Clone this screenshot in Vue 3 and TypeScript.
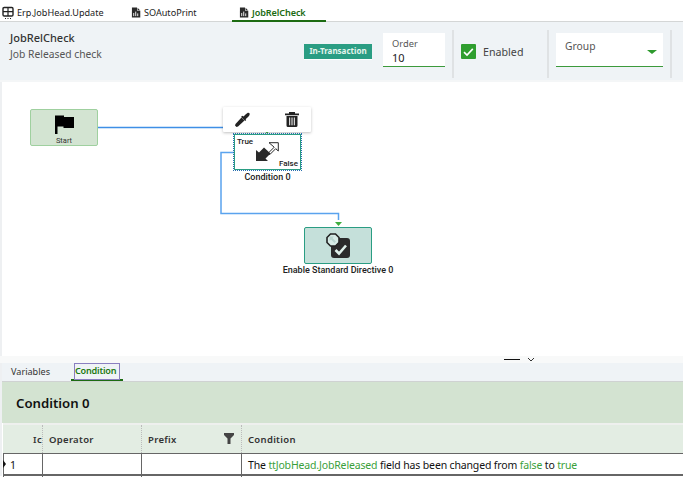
<script setup lang="ts">
interface Tab { label: string; icon: string; active?: boolean }
const tabs: Tab[] = [
  { label: 'Erp.JobHead.Update', icon: 'grid' },
  { label: 'SOAutoPrint', icon: 'doc' },
  { label: 'JobRelCheck', icon: 'doc', active: true },
]
</script>

<template>
  <div class="page">
    <nav class="tabs">
      <div v-for="t in tabs" :key="t.label" class="tab" :class="{ active: t.active, ['tab-' + t.icon]: true }">
        <svg v-if="t.icon === 'grid'" class="tab-icon" viewBox="0 0 12 14" width="12" height="14">
          <rect x="1" y="1.5" width="10" height="8.5" rx="1.2" fill="none" stroke="#222" stroke-width="1.400" />
          <path d="M1 5.700h10M6 1.500v8.500" stroke="#222" stroke-width="1.200" />
          <path d="M3 12.500h1M5.500 12.500h1M8 12.500h1" stroke="#222" stroke-width="1" />
        </svg>
        <svg v-else class="tab-icon" viewBox="0 0 11 12" width="10" height="11">
          <path d="M1 .5h6l3.200 3.200V11.500H1z" fill="#2a2a2a" />
          <path d="M6.600 0v4h4.400V0z" fill="#fff" />
          <path d="M7.200 .8v2.600h2.600z" fill="#2a2a2a" />
          <path d="M3 10V6.500M5.200 10V5M7.400 10V7" stroke="#fff" stroke-width="1" />
        </svg>
        <span>{{ t.label }}</span>
      </div>
    </nav>

    <header class="head">
      <div class="titles">
        <div class="title">JobRelCheck</div>
        <div class="subtitle">Job Released check</div>
      </div>
      <span class="badge">In-Transaction</span>
      <div class="field order">
        <label>Order</label>
        <span>10</span>
      </div>
      <div class="sep"></div>
      <div class="enabled">
        <span class="check">
          <svg viewBox="0 0 16 16" width="16" height="16"><path d="M3.200 8.200l3.200 3.100 6.200-6.600" fill="none" stroke="#fff" stroke-width="1.700" /></svg>
        </span>
        <span>Enabled</span>
      </div>
      <div class="sep"></div>
      <div class="field group">
        <label>Group</label>
        <i class="caret"></i>
      </div>
      <div class="sep last"></div>
    </header>

    <section class="canvas">
      <svg class="wires" width="683" height="274" viewBox="0 0 683 274">
        <path d="M98 45.500H225" fill="none" stroke="#3f8fe6" stroke-width="1.500" />
        <path d="M234 70.500H221V131.500H338.500V138" fill="none" stroke="#5aa3ee" stroke-width="1.500" />
        <path d="M335 140h7l-3.500 4z" fill="#3fae3f" />
        <path d="M265 49.500h4l-2 2z" fill="#3fae3f" />
      </svg>

      <div class="node start">
        <svg viewBox="0 0 19 19" width="19" height="19"><path d="M0 0.500h9v1.500h10v11H8.500v-1.500H2.500V19H0z" fill="#000" /></svg>
        <span>Start</span>
      </div>

      <div class="toolbar">
        <svg viewBox="0 0 15 15" width="15" height="15">
          <path d="M0 13.500l1.500 1.500 1.500-.5 6.500-6-3-3-6 6.500z" fill="#222" />
          <path d="M6 4.800l4.200 4.200 1-1-.6-.8 2.400-2.200c1.500-1.600 2-2.800 1.500-3.800-.8-1-2.200-.6-3.700 1L8.500 4.500l-.8-.8z" fill="#222" />
        </svg>
        <svg viewBox="0 0 14 15" width="14" height="15">
          <path d="M0 1.500h14v1.800H0zM4 0h6v1.500H4z" fill="#222" />
          <path d="M1.500 4h11v9.500a1.500 1.500 0 0 1-1.500 1.500H3a1.500 1.500 0 0 1-1.500-1.500z" fill="#222" />
          <path d="M4.700 5.500v7.800M7 5.500v7.800M9.300 5.500v7.800" stroke="#fff" stroke-width="1" />
        </svg>
      </div>

      <div class="node cond">
        <span class="lbl-true">True</span>
        <svg viewBox="0 0 23 19" width="23" height="19">
          <path d="M0 19V8l3 2.500L8 5.500l6.500 6-5 5 2.500 2.500z" fill="#2a2a2a" />
          <path d="M13 .7h9.300V9l-2.600-2.300-6 6-1.500-1.500 6-6z" fill="none" stroke="#2a2a2a" stroke-width="1" />
        </svg>
        <span class="lbl-false">False</span>
      </div>
      <div class="caption cond-cap">Condition 0</div>

      <div class="node directive">
        <svg viewBox="0 0 24 25" width="24" height="25">
          <rect x="5" y="5" width="19" height="20" rx="3" fill="#2b2b2b" />
          <path d="M9.500 17l3.500 3.500 7-8" fill="none" stroke="#dff0ea" stroke-width="2.600" />
          <path d="M4.500 1h5l3.500 3.500v5l-3.500 3.500h-5l-3.500-3.500v-5z" fill="#d7ebe6" stroke="#222" stroke-width="1.600" />
          <path d="M3.500 3.500h4.500l-1.500 1.500 3.500 3.500-1.500 1.500-3.500-3.500-1.500 1.500z" fill="#b8d4ce" />
        </svg>
      </div>
      <div class="caption dir-cap">Enable Standard Directive 0</div>
    </section>

    <div class="splitter">
      <i class="dash"></i>
      <svg viewBox="0 0 8 5" width="8" height="5"><path d="M1 1l3 3 3-3" fill="none" stroke="#333" stroke-width="1" /></svg>
    </div>

    <section class="lower">
      <div class="subtabs">
        <span class="subtab">Variables</span>
        <span class="subtab active"><b>Condition</b></span>
      </div>
      <div class="band">Condition 0</div>
      <div class="grid grid-head">
        <div class="th id">Ic</div>
        <div class="th">Operator</div>
        <div class="th prefix">
          Prefix
          <svg viewBox="0 0 10 11" width="10" height="11"><path d="M0 0h10v2L6.500 5.500V11h-3V5.500L0 2z" fill="#444" /></svg>
        </div>
        <div class="th">Condition</div>
      </div>
      <div class="grid grid-row">
        <div class="td id"><i class="marker"></i>1</div>
        <div class="td"></div>
        <div class="td"></div>
        <div class="td text">The <em>ttJobHead.JobReleased</em> field has been changed from <em>false</em> to <em>true</em></div>
      </div>
    </section>
  </div>
</template>

<style>
html, body { margin: 0; background: #fff; }
</style>

<style scoped>
.page {
  width: 683px;
  height: 500px;
  overflow: hidden;
  position: relative;
  background: #fff;
  font-family: "Noto Sans", "Liberation Sans", sans-serif;
  color: #222;
}
.tabs {
  height: 18px;
  margin-top: 4px;
  box-sizing: border-box;
  display: flex;
  border-bottom: 1px solid #d4d6d6;
  font-size: 9.100px;
  background: #fff;
}
.tab { display: flex; align-items: center; gap: 3px; height: 17px; box-sizing: border-box; }
.tab-grid { width: 128px; padding-left: 2px; }
.tab-doc { width: 104px; padding-left: 3px; }
.tab.active { width: 94px; padding-left: 7px; color: #1c6b12; font-weight: 600; border-bottom: 2px solid #1c6b12; height: 18px; letter-spacing: -.1px; }
.tab-icon { flex: none; }
.head {
  height: 60px;
  box-sizing: border-box;
  background: #eff3f6;
  display: flex;
  align-items: center;
  border-bottom: 2px solid #f4f6f7;
}
.titles { width: 304px; padding-left: 10px; box-sizing: border-box; margin-top: -10px; }
.title { font-size: 11px; font-weight: 500; line-height: 15px; color: #333; }
.subtitle { font-size: 10.300px; line-height: 18px; color: #555; }
.badge {
  width: 68px;
  height: 15px;
  margin-right: 11px;
  background: #2a9d83;
  color: #e6f5ee;
  border-bottom: 1px solid #fff;
  font-size: 8px;
  font-weight: 700;
  line-height: 14px;
  text-align: center;
  margin-top: 2px;
}
.field {
  background: #fff;
  border-bottom: 1px solid #3c9a3c;
  box-sizing: border-box;
  height: 34px;
  position: relative;
  margin-top: -2px;
}
.field label { display: block; font-size: 9.300px; color: #555; }
.order { width: 62px; padding: 4px 0 0 9px; font-size: 11px; color: #222; line-height: 14px; }
.sep { width: 2px; height: 48px; background: #dfe2e4; margin: 6px 0 0 7px; }
.enabled { width: 86px; display: flex; align-items: center; gap: 7px; padding-left: 7px; box-sizing: border-box; font-size: 10.700px; color: #444; margin-top: 1px; }
.check { width: 15px; height: 15px; background: #2f9e2f; display: flex; align-items: center; justify-content: center; border-radius: 1px; }
.group { width: 107px; margin-left: 7px; padding: 6px 0 0 9px; }
.group label { font-size: 10.300px; }
.caret { position: absolute; right: 6px; top: 17px; border: 5px solid transparent; border-top: 4px solid #2e9a2e; border-bottom: 0; }
.canvas {
  position: relative;
  height: 274px;
  border-left: 2px solid #eef0f2;
  box-sizing: border-box;
}
.wires { position: absolute; left: -2px; top: 0; }
.node { position: absolute; box-sizing: border-box; }
.start {
  left: 28px; top: 27px; width: 68px; height: 37px;
  background: #d3e4d2; border: 1px solid #9fd09f; border-radius: 2px;
  display: flex; flex-direction: column; align-items: center;
  font-family: Roboto, sans-serif; font-size: 7.500px; line-height: 9px; color: #333;
}
.start svg { margin: 5px 0 2px; flex: none; }
.toolbar {
  position: absolute; left: 221px; top: 25px; width: 88px; height: 25px;
  background: #fff; border-radius: 1px; box-shadow: 0 1px 3px rgba(0,0,0,.25);
  display: flex; justify-content: space-between; align-items: center;
  padding: 0 12px; box-sizing: border-box;
}
.cond {
  left: 232px; top: 52px; width: 67px; height: 36px;
  background: #fff; border: 1px solid #2a9d83; outline: 1px dotted #2a6fb0;
  display: flex; align-items: center; justify-content: center;
}
.cond svg { margin-bottom: 2px; }
.lbl-true { position: absolute; left: 2px; top: 1px; font-family: Roboto, sans-serif; font-size: 8px; font-weight: 500; line-height: 11px; }
.lbl-false { position: absolute; right: 2px; bottom: 0; font-family: Roboto, sans-serif; font-size: 8px; font-weight: 500; line-height: 11px; }
.caption { position: absolute; font-size: 9px; font-weight: 500; color: #222; text-align: center; font-family: Roboto, sans-serif; line-height: 12px; white-space: nowrap; }
.cond-cap { left: 225px; top: 89px; width: 81px; }
.directive {
  left: 302px; top: 145px; width: 68px; height: 37px;
  background: #c5e0da; border: 1px solid #2a9d83; border-radius: 2px;
  display: flex; align-items: center; justify-content: center;
}
.dir-cap { left: 256px; top: 182px; width: 160px; }
.splitter {
  height: 7px;
  background: #f8f9f9;
  display: flex; align-items: center; justify-content: flex-end; gap: 7px;
  padding-right: 148px;
  position: relative;
}
.dash { width: 16px; height: 1px; background: #111; display: block; }
.lower { border-left: 2px solid #eef0f2; box-sizing: border-box; }
.subtabs {
  height: 19px; background: #eff3f6; border-bottom: 1px solid #cfd2d2;
  display: flex; font-size: 9.100px; box-sizing: border-box; padding-left: 9px; align-items: flex-end;
}
.subtab { height: 18px; line-height: 18px; width: 60px; color: #333; }
.subtab.active {
  box-sizing: border-box; width: 52px; color: #1c7a12;
  border-bottom: 2px solid #1c6b12; padding: 1px 4px 0;
}
.subtab.active b { font-weight: 600; display: block; outline: 1px solid #8a7fc0; height: 15px; line-height: 14px; letter-spacing: -.2px; }
.band {
  height: 41px; background: #d3e3d1; box-sizing: border-box;
  padding-left: 14px; font-size: 13.200px; font-weight: 600; line-height: 43px; color: #111;
}
.grid {
  display: grid;
  grid-template-columns: 40px 99px 100px 1fr;
  margin-left: 1px;
}
.grid-head { height: 30px; background: #e3ede3; border-top: 2px solid #eef0ee; box-sizing: border-box; }
.th {
  font-size: 9.500px; font-weight: 600; color: #333; letter-spacing: .3px; padding-left: 6px; line-height: 30px;
  border-right: 1px dotted #bbb; white-space: nowrap; position: relative;
}
.th:last-child { border-right: 0; }
.th.id { text-align: right; overflow: hidden; }
.prefix svg { position: absolute; right: 7px; top: 8px; }
.grid-row { height: 23px; border-top: 1px solid #666; border-bottom: 2px solid #666; box-sizing: border-box; }
.td { font-size: 10.500px; line-height: 23px; color: #111; padding-left: 6px; border-right: 1px solid #666; white-space: nowrap; position: relative; }
.td:last-child { border-right: 0; }
.td.text { letter-spacing: -.15px; }
.td.id { border-left: 1px solid #666; }
.td em { font-style: normal; color: #3a9f3a; }
.marker { position: absolute; left: -1px; top: 6px; border: 4px solid transparent; border-left: 3px solid #111; border-right: 0; }
</style>
